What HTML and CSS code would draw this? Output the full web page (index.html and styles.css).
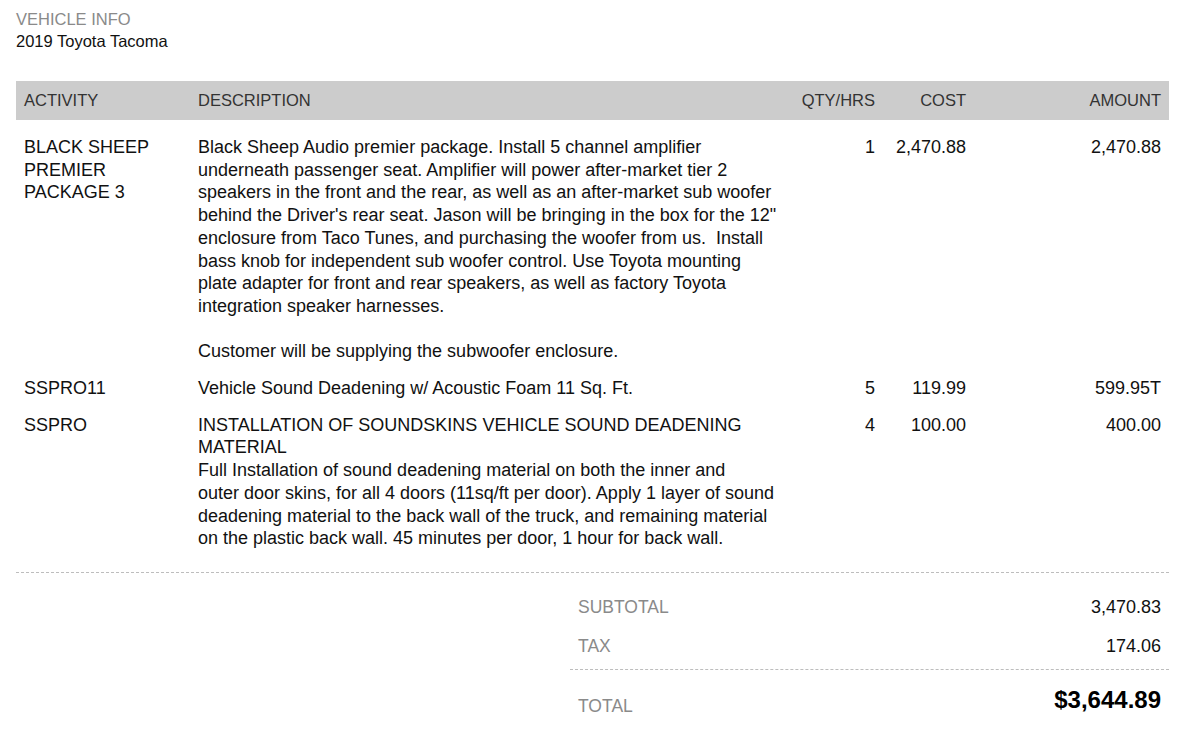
FILE: index.html
```html
<!DOCTYPE html>
<html lang="en">
<head>
<meta charset="utf-8">
<title>Invoice</title>
<link rel="stylesheet" href="styles.css">
</head>
<body>
<div class="page">
  <div class="vehicle">
    <div class="label">VEHICLE INFO</div>
    <div class="value">2019 Toyota Tacoma</div>
  </div>

  <table class="items">
    <colgroup>
      <col class="c-activity">
      <col class="c-desc">
      <col class="c-qty">
      <col class="c-cost">
      <col class="c-amount">
    </colgroup>
    <thead>
      <tr>
        <th class="left">ACTIVITY</th>
        <th class="left">DESCRIPTION</th>
        <th class="right">QTY/HRS</th>
        <th class="right">COST</th>
        <th class="right">AMOUNT</th>
      </tr>
    </thead>
    <tbody>
      <tr>
        <td>BLACK SHEEP PREMIER PACKAGE 3</td>
        <td>Black Sheep Audio premier package. Install 5 channel amplifier underneath passenger seat. Amplifier will power after-market tier 2 speakers in the front and the rear, as well as an after-market sub woofer behind the Driver's rear seat. Jason will be bringing in the box for the 12" enclosure from Taco Tunes, and purchasing the woofer from us.&nbsp; Install bass knob for independent sub woofer control. Use Toyota mounting plate adapter for front and rear speakers, as well as factory Toyota integration speaker harnesses.<br><br>Customer will be supplying the subwoofer enclosure.</td>
        <td class="right">1</td>
        <td class="right">2,470.88</td>
        <td class="right">2,470.88</td>
      </tr>
      <tr>
        <td>SSPRO11</td>
        <td>Vehicle Sound Deadening w/ Acoustic Foam 11 Sq. Ft.</td>
        <td class="right">5</td>
        <td class="right">119.99</td>
        <td class="right">599.95T</td>
      </tr>
      <tr>
        <td>SSPRO</td>
        <td>INSTALLATION OF SOUNDSKINS VEHICLE SOUND DEADENING MATERIAL<br>Full Installation of sound deadening material on both the inner and<br>outer door skins, for all 4 doors (11sq/ft per door). Apply 1 layer of sound deadening material to the back wall of the truck, and remaining material on the plastic back wall. 45 minutes per door, 1 hour for back wall.</td>
        <td class="right">4</td>
        <td class="right">100.00</td>
        <td class="right">400.00</td>
      </tr>
    </tbody>
  </table>

  <div class="totals-wrap">
    <div class="totals">
      <div class="t-row">
        <span class="t-label">SUBTOTAL</span>
        <span class="t-value">3,470.83</span>
      </div>
      <div class="t-row">
        <span class="t-label">TAX</span>
        <span class="t-value">174.06</span>
      </div>
      <div class="t-row t-total">
        <span class="t-label">TOTAL</span>
        <span class="t-grand">$3,644.89</span>
      </div>
    </div>
  </div>
</div>
</body>
</html>
```

FILE: styles.css
```css
* { box-sizing: border-box; }

html, body {
  margin: 0;
  padding: 0;
  background: #ffffff;
}

body {
  font-family: "Liberation Sans", Arial, sans-serif;
  font-size: 16.5px;
  line-height: 22px;
  color: #111111;
}

.page {
  width: 1169px;
  padding: 8px 0 0 16px;
}

.vehicle .label {
  color: #8a8a8a;
}

.vehicle .value {
  color: #111111;
}

.items {
  margin-top: 29px;
  width: 1153px;
  table-layout: fixed;
  border-collapse: collapse;
}

.c-activity { width: 174px; }
.c-desc { width: 601px; }
.c-qty { width: 92px; }
.c-cost { width: 91px; }
.c-amount { width: 195px; }

.items th {
  background: #cccccc;
  color: #333333;
  font-size: 16.5px;
  font-weight: normal;
  line-height: 22.7px;
  padding: 8px 8px;
  height: 39px;
}

.items td {
  vertical-align: top;
  font-size: 18px;
  line-height: 22.7px;
  padding: 7px 8px;
  color: #111111;
}

.items tbody tr:first-child td {
  padding-top: 16px;
}

.left { text-align: left; }
.right { text-align: right; }

.totals-wrap {
  margin-top: 15px;
  border-top: 1px dashed #bdbdbd;
  display: flex;
  justify-content: flex-end;
  padding-top: 15px;
}

.totals {
  width: 599px;
}

.t-row {
  display: flex;
  justify-content: space-between;
  padding: 8px 8px;
  font-size: 18px;
  line-height: 22.7px;
}

.t-label {
  color: #8a8a8a;
  font-size: 17.5px;
}

.t-value {
  color: #111111;
}

.t-total {
  margin-top: 4px;
  border-top: 1px dashed #bdbdbd;
  align-items: flex-end;
  padding-top: 16px;
  padding-bottom: 0;
}

.t-grand {
  font-size: 24px;
  font-weight: bold;
  line-height: 28px;
  margin-bottom: 3px;
  color: #000000;
}
```
